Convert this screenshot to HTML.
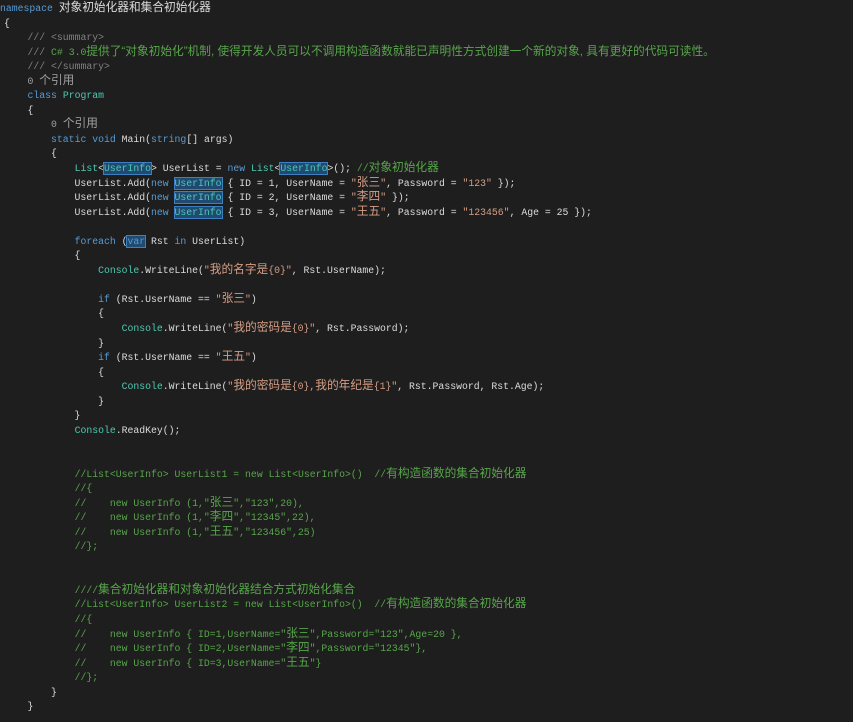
<!DOCTYPE html>
<html><head><meta charset="utf-8"><style>
html,body{margin:0;padding:0;background:#1e1e1e;width:853px;height:722px;overflow:hidden}
pre{position:absolute;left:4px;top:2px;margin:0;font-family:"Liberation Mono","Noto Sans CJK SC",monospace;font-size:9.8px;line-height:14.55px;color:#dcdcdc;white-space:pre}
.c{font-family:"Liberation Sans","Noto Sans CJK SC",sans-serif;font-size:11.7px;line-height:0}
.k{color:#569cd6}.t{color:#4ec9b0}.s{color:#d69d85}.g{color:#57a64a}.x{color:#808080}.r{color:#a0a0a0}
.h{background:#1f4a72;outline:1px solid #3d7fc0}
</style></head><body>
<pre><span style="margin-left:-4px" class="k">namespace</span> <span class="c">对象初始化器和集合初始化器</span>
{
    <span class="x">/// &lt;summary&gt;</span>
    <span class="g"><span class="x">///</span> C# 3.0<span class="c">提供了“对象初始化”机制, 使得开发人员可以不调用构造函数就能已声明性方式创建一个新的对象, 具有更好的代码可读性。</span></span>
    <span class="x">/// &lt;/summary&gt;</span>
    <span class="r">0 <span class="c">个引用</span></span>
    <span class="k">class</span> <span class="t">Program</span>
    {
        <span class="r">0 <span class="c">个引用</span></span>
        <span class="k">static</span> <span class="k">void</span> Main(<span class="k">string</span>[] args)
        {
            <span class="t">List</span>&lt;<span class="t h">UserInfo</span>&gt; UserList = <span class="k">new</span> <span class="t">List</span>&lt;<span class="t h">UserInfo</span>&gt;(); <span class="g">//<span class="c">对象初始化器</span></span>
            UserList.Add(<span class="k">new</span> <span class="t h">UserInfo</span> { ID = 1, UserName = <span class="s">"<span class="c">张三</span>"</span>, Password = <span class="s">"123"</span> });
            UserList.Add(<span class="k">new</span> <span class="t h">UserInfo</span> { ID = 2, UserName = <span class="s">"<span class="c">李四</span>"</span> });
            UserList.Add(<span class="k">new</span> <span class="t h">UserInfo</span> { ID = 3, UserName = <span class="s">"<span class="c">王五</span>"</span>, Password = <span class="s">"123456"</span>, Age = 25 });

            <span class="k">foreach</span> (<span class="k h">var</span> Rst <span class="k">in</span> UserList)
            {
                <span class="t">Console</span>.WriteLine(<span class="s">"<span class="c">我的名字是</span>{0}"</span>, Rst.UserName);

                <span class="k">if</span> (Rst.UserName == <span class="s">"<span class="c">张三</span>"</span>)
                {
                    <span class="t">Console</span>.WriteLine(<span class="s">"<span class="c">我的密码是</span>{0}"</span>, Rst.Password);
                }
                <span class="k">if</span> (Rst.UserName == <span class="s">"<span class="c">王五</span>"</span>)
                {
                    <span class="t">Console</span>.WriteLine(<span class="s">"<span class="c">我的密码是</span>{0},<span class="c">我的年纪是</span>{1}"</span>, Rst.Password, Rst.Age);
                }
            }
            <span class="t">Console</span>.ReadKey();


            <span class="g">//List&lt;UserInfo&gt; UserList1 = new List&lt;UserInfo&gt;()  //<span class="c">有构造函数的集合初始化器</span></span>
            <span class="g">//{</span>
            <span class="g">//    new UserInfo (1,"<span class="c">张三</span>","123",20),</span>
            <span class="g">//    new UserInfo (1,"<span class="c">李四</span>","12345",22),</span>
            <span class="g">//    new UserInfo (1,"<span class="c">王五</span>","123456",25)</span>
            <span class="g">//};</span>


            <span class="g">////<span class="c">集合初始化器和对象初始化器结合方式初始化集合</span></span>
            <span class="g">//List&lt;UserInfo&gt; UserList2 = new List&lt;UserInfo&gt;()  //<span class="c">有构造函数的集合初始化器</span></span>
            <span class="g">//{</span>
            <span class="g">//    new UserInfo { ID=1,UserName="<span class="c">张三</span>",Password="123",Age=20 },</span>
            <span class="g">//    new UserInfo { ID=2,UserName="<span class="c">李四</span>",Password="12345"},</span>
            <span class="g">//    new UserInfo { ID=3,UserName="<span class="c">王五</span>"}</span>
            <span class="g">//};</span>
        }
    }</pre>
</body></html>
